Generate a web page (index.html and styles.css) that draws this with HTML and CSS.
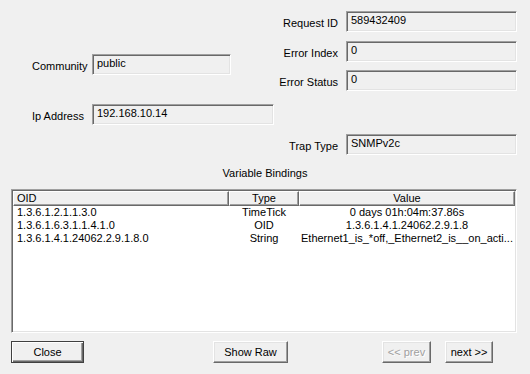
FILE: index.html
```html
<!DOCTYPE html>
<html>
<head>
<meta charset="utf-8">
<link rel="stylesheet" href="styles.css">
</head>
<body>
<div class="dialog">
  <div class="top">
    <div class="left-col">
      <div class="lrow">
        <span class="llabel">Community</span>
        <div class="field w-community">public</div>
      </div>
      <div class="lrow ip-row">
        <span class="llabel">Ip Address</span>
        <div class="field w-ip">192.168.10.14</div>
      </div>
    </div>
    <div class="right-col">
      <div class="rrow r-req">
        <span class="rlabel">Request ID</span>
        <div class="field w-right">589432409</div>
      </div>
      <div class="rrow r-idx">
        <span class="rlabel">Error Index</span>
        <div class="field w-right">0</div>
      </div>
      <div class="rrow r-stat">
        <span class="rlabel">Error Status</span>
        <div class="field w-right">0</div>
      </div>
      <div class="rrow r-trap">
        <span class="rlabel">Trap Type</span>
        <div class="field w-right">SNMPv2c</div>
      </div>
    </div>
  </div>
  <div class="vb-title">Variable Bindings</div>
  <div class="list">
    <div class="hdr">
      <div class="hcell c-oid h-left">OID</div>
      <div class="hcell c-type">Type</div>
      <div class="hcell c-val">Value</div>
    </div>
    <div class="lrow-item">
      <div class="cell c-oid c-left">1.3.6.1.2.1.1.3.0</div>
      <div class="cell c-type">TimeTick</div>
      <div class="cell c-val">0 days 01h:04m:37.86s</div>
    </div>
    <div class="lrow-item">
      <div class="cell c-oid c-left">1.3.6.1.6.3.1.1.4.1.0</div>
      <div class="cell c-type">OID</div>
      <div class="cell c-val">1.3.6.1.4.1.24062.2.9.1.8</div>
    </div>
    <div class="lrow-item">
      <div class="cell c-oid c-left">1.3.6.1.4.1.24062.2.9.1.8.0</div>
      <div class="cell c-type">String</div>
      <div class="cell c-val">Ethernet1_is_*off,_Ethernet2_is__on_acti...</div>
    </div>
  </div>
  <div class="buttons">
    <div class="btn default b-close">Close</div>
    <div class="btn b-raw">Show Raw</div>
    <div class="btn disabled b-prev">&lt;&lt; prev</div>
    <div class="btn b-next">next &gt;&gt;</div>
  </div>
</div>
</body>
</html>
```

FILE: styles.css
```css
html, body {
  margin: 0;
  padding: 0;
  background: #f0f0f0;
}
body {
  width: 530px;
  height: 374px;
  overflow: hidden;
  font-family: "Liberation Sans", Arial, sans-serif;
  font-size: 11px;
  line-height: 13px;
  color: #000;
}
.dialog {
  display: flex;
  flex-direction: column;
}
.top {
  display: flex;
  height: 156px;
}
.left-col {
  width: 242px;
  padding-left: 32px;
  padding-top: 54px;
  display: flex;
  flex-direction: column;
}
.lrow {
  display: flex;
  align-items: center;
  height: 21px;
}
.ip-row {
  margin-top: 29px;
}
.llabel {
  width: 60px;
  padding-top: 3px;
}
.field {
  box-sizing: border-box;
  height: 21px;
  border: 1px solid;
  border-color: #a0a0a0 #ffffff #ffffff #a0a0a0;
  box-shadow: inset 1px 1px 0 #696969, inset -1px -1px 0 #e3e3e3;
  padding: 2px 3px 0 4px;
  background: #f0f0f0;
  white-space: nowrap;
}
.w-community { width: 139px; }
.w-ip { width: 182px; }
.w-right { width: 171px; }
.right-col {
  display: flex;
  flex-direction: column;
}
.rrow {
  display: flex;
  align-items: center;
  height: 21px;
}
.rlabel {
  width: 64px;
  margin-right: 8px;
  text-align: right;
  padding-top: 3px;
}
.r-req { margin-top: 11px; }
.r-idx { margin-top: 9px; }
.r-stat { margin-top: 8px; }
.r-trap { margin-top: 43px; }
.vb-title {
  margin-top: 11px;
  text-align: center;
}
.list {
  box-sizing: border-box;
  margin: 9px 13px 0 11px;
  height: 144px;
  background: #fff;
  border: 1px solid;
  border-color: #a0a0a0 #ffffff #ffffff #a0a0a0;
  box-shadow: inset 1px 1px 0 #696969, inset -1px -1px 0 #e3e3e3;
  padding: 1px;
}
.hdr {
  display: flex;
  height: 15px;
  background: #f0f0f0;
}
.hcell {
  box-sizing: border-box;
  height: 15px;
  border: 1px solid;
  border-color: #ffffff #696969 #696969 #ffffff;
  box-shadow: inset -1px -1px 0 #a0a0a0;
  text-align: center;
  line-height: 13px;
}
.hcell.h-left {
  text-align: left;
  padding-left: 3px;
}
.c-oid { width: 216px; }
.c-type { width: 70px; }
.c-val { width: 216px; }
.lrow-item {
  display: flex;
  height: 13px;
}
.cell {
  box-sizing: border-box;
  text-align: center;
  white-space: nowrap;
  overflow: hidden;
}
.cell.c-left {
  text-align: left;
  padding-left: 4px;
}
.buttons {
  display: flex;
  margin-top: 8px;
  padding-left: 11px;
}
.btn {
  box-sizing: border-box;
  height: 22px;
  border: 1px solid;
  border-color: #ffffff #696969 #696969 #ffffff;
  box-shadow: inset -1px -1px 0 #a0a0a0, inset 1px 1px 0 #e3e3e3;
  text-align: center;
  line-height: 20px;
}
.btn.default {
  border: 1px solid #404040;
  box-shadow: inset 1px 1px 0 #ffffff, inset -1px -1px 0 #696969, inset -2px -2px 0 #a0a0a0;
}
.btn.disabled {
  color: #a0a0a0;
  text-shadow: 1px 1px 0 #ffffff;
}
.b-close { width: 73px; }
.b-raw { width: 75px; margin-left: 129px; }
.b-prev { width: 49px; margin-left: 94px; }
.b-next { width: 48px; margin-left: 14px; }
```
